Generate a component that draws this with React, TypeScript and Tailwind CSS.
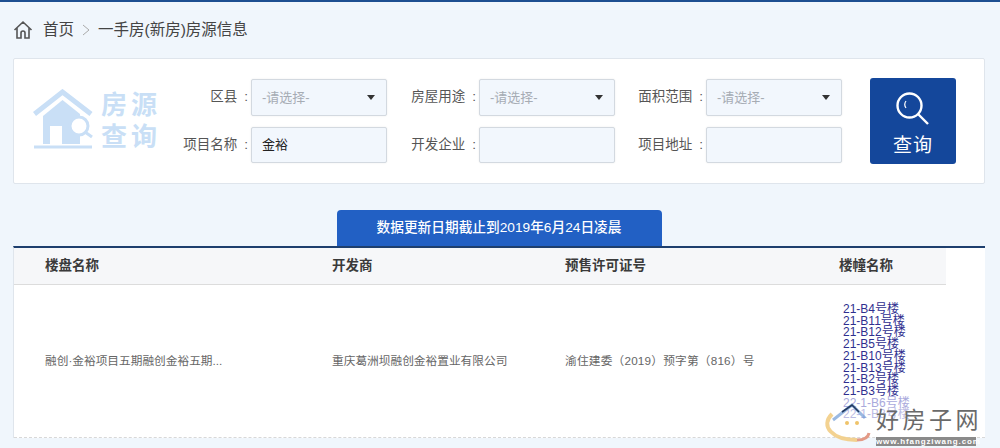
import React from "react";

const cjk = { fontFamily: '"Liberation Sans", "Noto Sans CJK SC", sans-serif' };

function Select() {
  return (
    <div className="flex h-[37px] w-[136px] items-center justify-between rounded-[2px] border border-[#d3d9e0] bg-[#f2f7fd] pl-[10px] pr-[11px] text-[13px] text-[#a6acb4] shadow-[0_0_2px_rgba(0,0,0,0.08)]">
      <span>-请选择-</span>
      <span className="h-0 w-0 border-x-[4.5px] border-t-[5px] border-x-transparent border-t-[#333]" />
    </div>
  );
}

function Input({ value }: { value?: string }) {
  return (
    <div className="flex h-[36px] w-[136px] items-center rounded-[2px] border border-[#d3d9e0] bg-[#f2f7fd] pl-[10px] text-[13px] text-[#222] shadow-[0_0_2px_rgba(0,0,0,0.08)]">
      {value}
    </div>
  );
}

function Label({ text }: { text: string }) {
  return (
    <div className="whitespace-nowrap pr-[3px] text-right text-[13.5px] text-[#555]">
      {text}
      <span className="ml-[7px]">:</span>
    </div>
  );
}

const buildings = ["21-B4号楼", "21-B11号楼", "21-B12号楼", "21-B5号楼", "21-B10号楼", "21-B13号楼", "21-B2号楼", "21-B3号楼"];

export default function App() {
  return (
    <div style={cjk} className="relative h-[448px] w-[1000px] overflow-hidden bg-[#f0f6fc]">
      <div className="h-[2px] bg-[#1d4f91]" />
      <div className="flex h-[56px] items-center pl-[13px] text-[15.5px] text-[#444]">
        <svg width="20" height="20" viewBox="0 0 20 20" fill="none" stroke="#555" strokeWidth="1.6" className="mr-[10px]">
          <path d="M1.5 10 10 2l8.5 8M4 8v10h4v-5a2 2 0 0 1 4 0v5h4V8" />
        </svg>
        <span>首页</span>
        <svg width="10" height="12" viewBox="0 0 10 12" fill="none" stroke="#aaa" strokeWidth="1" className="mx-[7px]">
          <path d="M2 1l6 5-6 5" />
        </svg>
        <span>一手房(新房)房源信息</span>
      </div>

      <div className="mx-[13px] flex h-[126px] w-[972px] items-center rounded-[2px] border border-[#dfe5ec] bg-white">
        <div className="flex w-[147px] shrink-0 items-center pl-[19px]">
          <svg width="60" height="60" viewBox="0 0 60 60" fill="none" className="mb-[4px] shrink-0">
            <path d="M1.5 25 29.5 3 58 25" stroke="#c9dff6" strokeWidth="5" />
            <path d="M10 27 29.5 11 47 25v30H10z" fill="#c9dff6" />
            <rect x="17" y="37" width="12" height="18" fill="#fff" />
            <path d="m50 40 9 8" stroke="#fff" strokeWidth="7" />
            <circle cx="46" cy="37" r="9" fill="#fff" stroke="#c9dff6" strokeWidth="3" />
            <path d="m52 43 7 5" stroke="#c9dff6" strokeWidth="3" />
            <path d="M1 58h58" stroke="#c9dff6" strokeWidth="3" />
          </svg>
          <div className="ml-[8px] w-[60px] shrink-0 text-[26px] font-bold leading-[32px] tracking-[4px] text-[#c9dff6]">房源查询</div>
        </div>
        <div className="grid grid-cols-[90px_137px_91px_136px_91px_136px] items-center gap-y-[11px]">
          <Label text="区县" />
          <Select />
          <Label text="房屋用途" />
          <Select />
          <Label text="面积范围" />
          <Select />
          <Label text="项目名称" />
          <Input value="金裕" />
          <Label text="开发企业" />
          <Input />
          <Label text="项目地址" />
          <Input />
        </div>
        <div className="ml-[28px] flex h-[86px] w-[86px] flex-col items-center rounded-[3px] bg-[#14479b] pt-[14px] text-white">
          <svg width="34" height="34" viewBox="0 0 34 34" fill="none" stroke="#fff" strokeWidth="2.4">
            <circle cx="13.5" cy="13.5" r="12" />
            <path d="m22 22 10 10" />
            <path d="M10 9a6 6 0 0 0 0 7" strokeWidth="1.2" />
          </svg>
          <span className="mt-[7px] text-[19px] leading-[26px] tracking-[1px]">查询</span>
        </div>
      </div>

      <div className="mt-[26px] flex justify-center pr-[1px]">
        <div className="mr-[1px] flex h-[36px] w-[325px] items-center justify-center rounded-t-[4px] bg-[#2260c4] text-[13.7px] font-medium text-white">
          数据更新日期截止到2019年6月24日凌晨
        </div>
      </div>

      <div className="mx-[13px] w-[972px] border-l border-t-2 border-l-[#dfe5ec] border-t-[#1e3f6e] bg-white">
        <div className="flex h-[37px] w-[932px] items-center border-b border-[#dcdcdc] bg-[#f6f7f9] pt-[1px] text-[13.5px] font-bold text-[#3a3a3a]">
          <div className="w-[318px] pl-[31px]">楼盘名称</div>
          <div className="w-[233px]">开发商</div>
          <div className="w-[274px]">预售许可证号</div>
          <div>楼幢名称</div>
        </div>
        <div className="flex h-[153px] items-center border-b border-dashed border-[#d8d8d8] text-[11.7px] text-[#666]">
          <div className="w-[318px] pl-[31px]">融创·金裕项目五期融创金裕五期...</div>
          <div className="w-[233px]">重庆葛洲坝融创金裕置业有限公司</div>
          <div className="w-[278px] tracking-[0.2px]">渝住建委（2019）预字第（816）号</div>
          <div className="flex flex-col self-start pt-[19px] text-[12px] leading-[11.7px] text-[#2f2f8f]">
            {buildings.map((b) => (
              <span key={b} className="whitespace-nowrap">{b}</span>
            ))}
            <span className="whitespace-nowrap text-[#a9a9dc]">22-1-B6号楼</span>
            <span className="whitespace-nowrap text-[#bcbce4]">22-1-B3号楼</span>
          </div>
        </div>
      </div>

      <div className="absolute left-[824px] top-[400px] h-[48px] w-[176px]">
        <svg width="50" height="46" viewBox="0 0 50 46" fill="none" className="absolute left-0 top-0">
          <path d="M8 14C-4 26 8 40 33 40" stroke="#f2cd85" strokeWidth="4" opacity="0.9" />
          <path d="M33 40c6 0 11-1 12-7" stroke="#e39a86" strokeWidth="3" />
          <path d="m9 20 19-15 13 13" stroke="#6f9bd6" strokeWidth="3" opacity="0.7" />
          <path d="m18 12 10-7 7 7" stroke="#23395f" strokeWidth="1.6" />
          <circle cx="23" cy="23" r="2" fill="#efc36a" />
          <circle cx="33" cy="23" r="2" fill="#efc36a" />
        </svg>
        <div style={{ fontFamily: '"Noto Sans CJK SC", sans-serif' }} className="absolute left-[52px] top-[4px] whitespace-nowrap text-[23px] font-normal leading-[28px] tracking-[3.5px] text-[#6a6a6a]">好房子网</div>
        <div className="absolute left-[52px] top-[37px] h-[9px] w-[100px] bg-[#8a8a8a] text-center text-[8px] font-bold leading-[9px] tracking-[0.9px] text-white">www.hfangziwang.com</div>
      </div>
    </div>
  );
}
